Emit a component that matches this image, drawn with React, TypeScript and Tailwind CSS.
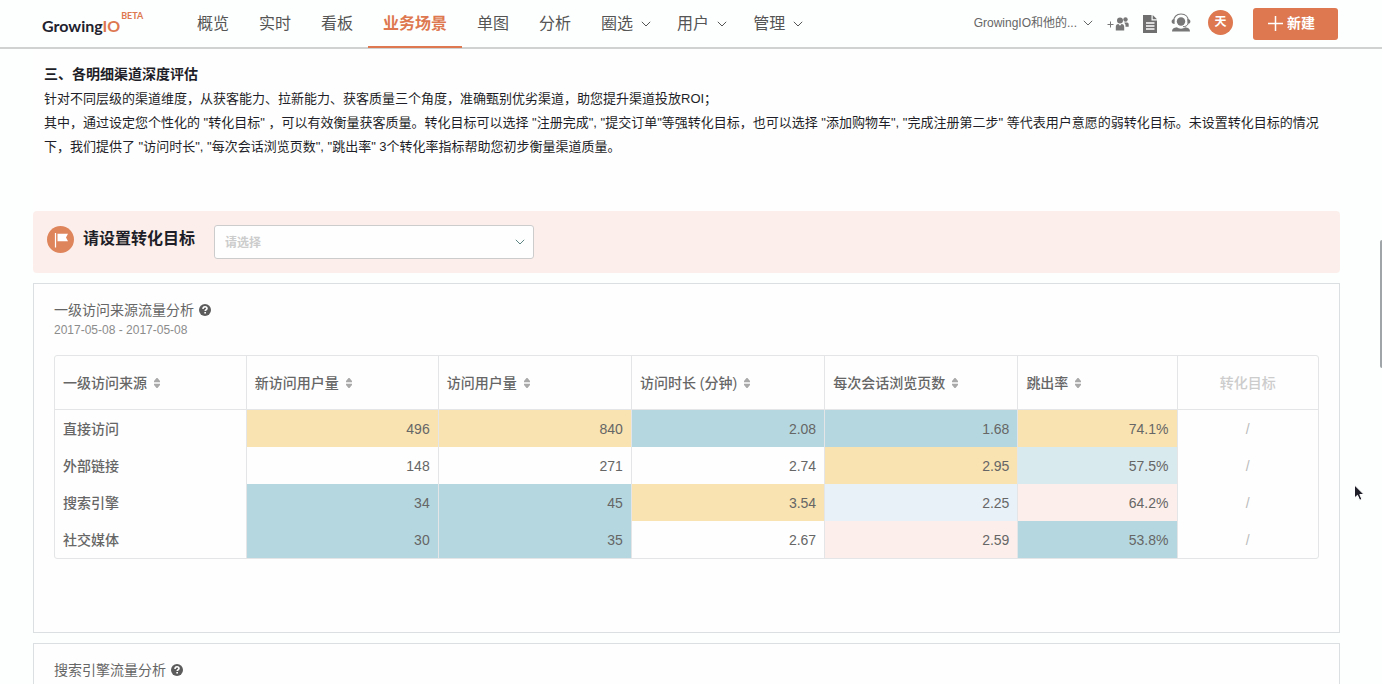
import { useState } from 'react'

const navItems = [
  { label: '概览' },
  { label: '实时' },
  { label: '看板' },
  { label: '业务场景', active: true },
  { label: '单图' },
  { label: '分析' },
  { label: '圈选', menu: true },
  { label: '用户', menu: true },
  { label: '管理', menu: true },
]

const columns = ['一级访问来源', '新访问用户量', '访问用户量', '访问时长 (分钟)', '每次会话浏览页数', '跳出率']

const high = 'bg-[#f8e3b1]'
const low = 'bg-[#b5d8e0]'
const midLow = 'bg-[#d9eaee]'
const paleBlue = 'bg-[#e8f1f8]'
const palePink = 'bg-[#fcefeb]'

const rows = [
  { name: '直接访问', cells: [['496', high], ['840', high], ['2.08', low], ['1.68', low], ['74.1%', high]] },
  { name: '外部链接', cells: [['148', ''], ['271', ''], ['2.74', ''], ['2.95', high], ['57.5%', midLow]] },
  { name: '搜索引擎', cells: [['34', low], ['45', low], ['3.54', high], ['2.25', paleBlue], ['64.2%', palePink]] },
  { name: '社交媒体', cells: [['30', low], ['35', low], ['2.67', ''], ['2.59', palePink], ['53.8%', low]] },
]

function Chevron({ className = '' }: { className?: string }) {
  return (
    <svg viewBox="0 0 10 6" className={`h-[6px] w-[10px] shrink-0 ${className}`} fill="none" stroke="currentColor" aria-hidden="true">
      <path d="M0.8 0.8 5 5l4.2-4.2" />
    </svg>
  )
}

function SortIcon() {
  return (
    <svg viewBox="0 0 8 10" className="h-[10px] w-2 shrink-0" fill="#a9a9a9" aria-hidden="true">
      <path d="M3.500 0h1l2.500 3v1.200H1V3zM1 5.800h6V7L4.500 10h-1L1 7z" />
    </svg>
  )
}

function HelpIcon() {
  return (
    <svg viewBox="0 0 12 12" className="h-3 w-3 shrink-0" aria-hidden="true">
      <circle cx="6" cy="6" r="6" fill="#5c5c5c" />
      <path d="M4 4.900C4 3.500 4.800 2.800 6 2.800s2 .7 2 1.700c0 1.300-1.800 1.200-1.800 2.500" fill="none" stroke="#fff" strokeWidth="1.600" />
      <path d="M5.300 7.900h1.700v1.600H5.300z" fill="#fff" />
    </svg>
  )
}

function InviteIcon() {
  return (
    <svg viewBox="0 0 22 16" className="h-4 w-[22px]" fill="#777" aria-hidden="true">
      <path d="M0.500 8.500h6M3.500 5.500v6" stroke="#777" fill="none" />
      <circle cx="18.500" cy="3.500" r="2.200" />
      <path d="M17.200 6.500h2.800c1.200 0 1.700.8 1.700 2v2.300h-3.200V8.800z" />
      <circle cx="13" cy="4.500" r="3" />
      <path d="M8.800 14.500V11c0-2 .8-3 2.700-3L13 9.700 14.500 8c1.900 0 2.700 1 2.700 3v3.500z" />
    </svg>
  )
}

function DocIcon() {
  return (
    <svg viewBox="0 0 14 18" className="h-[18px] w-[14px]" aria-hidden="true">
      <path d="M0 0h8.500v5.500H14V18H0z" fill="#6f6f6f" />
      <path d="M9.700 0 14 4.300H9.700z" fill="#6f6f6f" />
      <path d="M3 8h8.500M3 11h8.500M3 14h8.500" stroke="#fff" strokeWidth="1.300" />
    </svg>
  )
}

function SupportIcon() {
  return (
    <svg viewBox="0 0 20 19" className="h-[19px] w-5" fill="#777" aria-hidden="true">
      <path d="M2.500 8.500C2.500 4 5.500 1 10 1s7.500 3 7.500 7.500" fill="none" stroke="#777" strokeWidth="1.200" />
      <path d="M3.600 6v5C1.500 11 .6 10 .6 8.500S1.500 6 3.600 6zM16.400 6v5c2.100 0 3-1 3-2.500S18.500 6 16.400 6z" />
      <circle cx="10" cy="8.500" r="4.200" />
      <path d="M17 11c-.8 1.800-2.500 2.600-5 2.700" fill="none" stroke="#777" />
      <path d="M1 18.500c0-2.500 1.500-3.700 5-4.200 1.200 1 2.500 1.400 4 1.400s2.800-.4 4-1.400c3.500.5 5 1.700 5 4.200z" />
    </svg>
  )
}

function FlagIcon() {
  return (
    <svg viewBox="0 0 27 27" className="h-[27px] w-[27px] shrink-0" aria-hidden="true">
      <circle cx="13.500" cy="13.500" r="13.500" fill="#df855c" />
      <path d="M8.500 7v14.500" stroke="#fff" strokeWidth="1.200" />
      <path d="M10.500 7.800H21l-2 3.700 2 3.800H10.500z" fill="#fff" />
    </svg>
  )
}

function Header() {
  return (
    <header className="flex h-[49px] shrink-0 items-start border-b-2 border-[#d0d2d1] bg-[#fdfffe]">
      <a href="#" className="ml-[42px] flex h-12 w-[140px] shrink-0 items-center pt-1 font-['Lato',sans-serif] font-bold text-[#22222e]">
        <span className="text-base leading-5">Growing<span className="text-[#dd7850]">IO</span></span>
        <span className="mb-5 ml-px text-[9px] leading-3 text-[#dd7850]">BETA</span>
      </a>
      <nav className="flex shrink-0">
        {navItems.map(item => (
          <a
            key={item.label}
            href="#"
            className={`flex h-12 items-center border-b-2 pt-0.5 pl-[15px] text-base leading-6 ${
              item.active ? 'border-[#dd7850] font-bold text-[#dd7850]' : 'border-transparent text-[#555]'
            } ${item.menu ? 'gap-2 pr-[11px]' : 'pr-[15px]'}`}
          >
            {item.label}
            {item.menu && <Chevron />}
          </a>
        ))}
      </nav>
      <div className="mr-11 ml-auto flex h-12 items-center">
        <button type="button" className="mb-0.5 flex items-center gap-1.5 text-xs leading-5 text-[#666]">
          GrowingIO和他的...
          <Chevron />
        </button>
        <button type="button" aria-label="邀请成员" className="ml-3.5"><InviteIcon /></button>
        <button type="button" aria-label="文档" className="ml-3.5"><DocIcon /></button>
        <button type="button" aria-label="客服" className="mb-1 ml-3.5"><SupportIcon /></button>
        <button type="button" className="mb-1 ml-[17px] flex h-[25px] w-[25px] items-center justify-center rounded-full bg-[#dd7850] text-xs font-bold text-white">天</button>
        <button type="button" className="ml-5 flex h-8 w-[85px] items-center gap-1 rounded-[3px] bg-[#dd7850] pb-0.5 pl-[15px] text-sm font-bold text-white">
          <svg viewBox="0 0 15 15" className="h-[15px] w-[15px]" stroke="#fff" strokeWidth="1.500" aria-hidden="true"><path d="M7.500 0v15M0 7.500h15" /></svg>
          新建
        </button>
      </div>
    </header>
  )
}

function PanelTitle({ children }: { children: string }) {
  return (
    <h3 className="flex items-center gap-[5px] text-sm leading-5 text-[#666]">
      {children}
      <HelpIcon />
    </h3>
  )
}

function SourceTable() {
  return (
    <div className="mt-4 overflow-hidden rounded-[3px] border border-[#e3e5e6]">
      <table className="w-full table-fixed border-separate border-spacing-0 text-sm leading-5 text-[#666]">
        <colgroup>
          <col className="w-[15.1%]" />
          <col className="w-[15.2%]" />
          <col className="w-[15.3%]" />
          <col className="w-[15.3%]" />
          <col className="w-[15.3%]" />
          <col className="w-[12.6%]" />
          <col />
        </colgroup>
        <thead>
          <tr className="h-[54px]">
            {columns.map(c => (
              <th key={c} className="border-b border-l border-[#e3e5e6] px-2 text-left font-medium first:border-l-0">
                <button type="button" className="flex items-center gap-1.5">
                  {c}
                  <SortIcon />
                </button>
              </th>
            ))}
            <th className="border-b border-l border-[#e3e5e6] px-2 text-center font-medium text-[#ccc]">转化目标</th>
          </tr>
        </thead>
        <tbody>
          {rows.map(row => (
            <tr key={row.name} className="h-[37px]">
              <td className="px-2 font-medium">{row.name}</td>
              {row.cells.map(([value, color], i) => (
                <td key={i} className={`border-l border-[#e3e5e6] px-2 text-right ${color}`}>{value}</td>
              ))}
              <td className="border-l border-[#e3e5e6] px-2 text-center text-[#bbb]">/</td>
            </tr>
          ))}
        </tbody>
      </table>
    </div>
  )
}

export default function App() {
  const [goal, setGoal] = useState('')

  return (
    <div className="relative flex h-screen flex-col overflow-hidden bg-[#fdfffe] font-['Liberation_Sans','Noto_Sans_CJK_SC',sans-serif]" lang="zh-CN">
      <Header />
      <main className="flex-1 overflow-y-auto pr-[42px] pl-[33px] [scrollbar-width:none]">
        <section className="bg-[#fefefe] px-[11px] pt-[13px] pb-[52px] text-[13px] leading-6 text-[#1e1e28]">
          <h2 className="pb-px text-sm leading-6 font-bold">三、各明细渠道深度评估</h2>
          <p>针对不同层级的渠道维度，从获客能力、拉新能力、获客质量三个角度，准确甄别优劣渠道，助您提升渠道投放ROI；</p>
          <p>
            其中，通过设定您个性化的 "转化目标" ，可以有效衡量获客质量。转化目标可以选择 "注册完成", "提交订单"等强转化目标，也可以选择 "添加购物车", "完成注册第二步" 等代表用户意愿的弱转化目标。未设置转化目标的情况下，我们提供了 "访问时长", "每次会话浏览页数", "跳出率" 3个转化率指标帮助您初步衡量渠道质量。
          </p>
        </section>

        <section className="flex h-[62px] items-center rounded bg-[#fcefeb] px-3.5">
          <div className="mb-1.5 flex items-center">
            <FlagIcon />
            <label htmlFor="goal" className="ml-[9px] text-base leading-6 font-bold text-[#1e1e28]">请设置转化目标</label>
          </div>
          <div className="relative ml-[19px] w-80">
            <select
              id="goal"
              value={goal}
              onChange={e => setGoal(e.target.value)}
              className="h-[34px] w-full appearance-none rounded-[3px] border border-[#ccc] bg-[#fefefe] px-2.5 pt-0.5 text-xs font-bold text-[#ccc] outline-none"
            >
              <option value="">请选择</option>
              <option value="register">注册完成</option>
              <option value="order">提交订单</option>
            </select>
            <Chevron className="pointer-events-none absolute top-[14px] right-[9px] text-[#5f8484]" />
          </div>
        </section>

        <section className="mt-2.5 min-h-[350px] border border-[#dcdfe1] bg-[#fefefe] px-5 pt-4">
          <PanelTitle>一级访问来源流量分析</PanelTitle>
          <p className="pt-px text-xs leading-[18px] text-[#8c8c8c]">2017-05-08 - 2017-05-08</p>
          <SourceTable />
        </section>

        <section className="mt-2.5 min-h-[350px] border border-[#dcdfe1] bg-[#fefefe] px-5 pt-4">
          <PanelTitle>搜索引擎流量分析</PanelTitle>
        </section>
      </main>

      {/* scroll thumb and pointer float over the page */}
      <div className="absolute top-60 right-0 h-32 w-0.5 rounded-l bg-[#9fa5a8]" />
      <svg viewBox="0 0 12 18" className="pointer-events-none absolute top-[484px] right-[17px] h-[18px] w-3" aria-hidden="true">
        <path d="M1.500 1v13l3-2.700 2.200 5 2.200-1-2.100-4.800H11z" fill="#1e1e28" stroke="#fff" />
      </svg>
    </div>
  )
}
